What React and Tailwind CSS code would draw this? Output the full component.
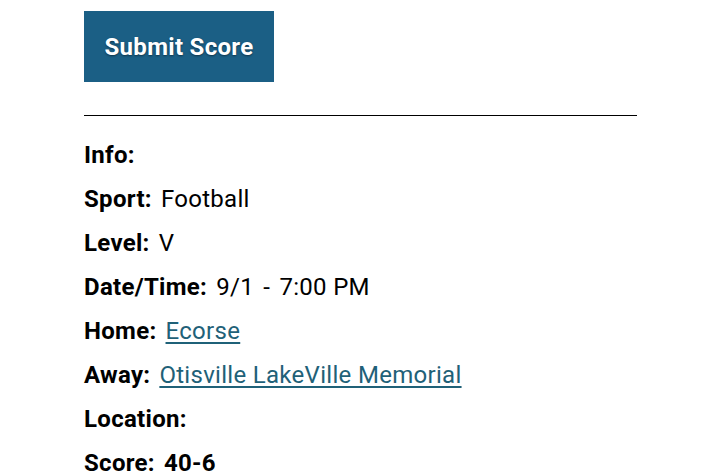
const rows = [
    { label: 'Info:' },
    { label: 'Sport:', value: 'Football' },
    { label: 'Level:', value: 'V' },
    { label: 'Date/Time:', value: <>9/1 <span className="mx-[3px]">-</span> 7:00 PM</> },
    { label: 'Home:', value: 'Ecorse', link: true },
    { label: 'Away:', value: 'Otisville LakeVille Memorial', link: true },
    { label: 'Location:' },
    { label: 'Score:', value: '40-6', bold: true },
]

const App = () => {
    return (
        <div className="min-h-screen bg-white pl-[84px] pt-[11px] text-[24px] tracking-[0.3px] text-black" style={{ fontFamily: 'Roboto, "Noto Sans", sans-serif' }}>
            <div className="w-[553px]">

                {/* SUBMIT BUTTON */}
                <button className="w-[190px] h-[71px] bg-[#1b5f85] text-white font-bold text-[24px] tracking-[0.3px] [text-shadow:0_1px_2px_rgba(0,0,0,0.45)]">
                    Submit Score
                </button>

                <hr className="mt-[33px] border-t border-black" />

                {/* GAME INFO */}
                <div className="mt-[17px]">
                    {rows.map((row) => (
                        <div key={row.label} className="flex items-center gap-[9px] h-[44px]">
                            <span className="font-bold">{row.label}</span>
                            {row.value && (
                                row.link
                                    ? <a href="#" className="text-[#1f6178] underline underline-offset-[3px]">{row.value}</a>
                                    : <span className={row.bold ? 'font-bold' : ''}>{row.value}</span>
                            )}
                        </div>
                    ))}
                </div>
            </div>
        </div>
    )
}

export default App
